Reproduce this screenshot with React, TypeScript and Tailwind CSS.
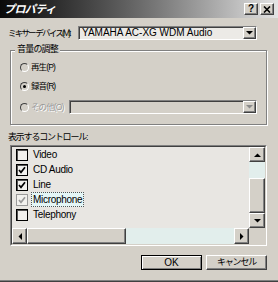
import React from "react";

const font = "font-['Liberation_Sans_Narrow','Liberation_Sans','Noto_Sans_CJK_JP',sans-serif]";
const raised =
  "border border-t-white border-l-white border-b-[#404040] border-r-[#404040] shadow-[inset_-1px_-1px_0_#808080]";
const sunken =
  "border border-t-[#808080] border-l-[#808080] border-b-white border-r-white shadow-[inset_1px_1px_0_#404040]";

type Dir = "up" | "down" | "left" | "right";

function Arrow({ dir, color = "#000" }: { dir: Dir; color?: string }) {
  const vert = dir === "up" || dir === "down";
  const pts = {
    up: "0,4 7,4 3.5,0.5",
    down: "0,0 7,0 3.5,3.5",
    left: "4,0 4,7 0.5,3.5",
    right: "0,0 0,7 3.5,3.5",
  }[dir];
  return (
    <svg width={vert ? 7 : 4} height={vert ? 4 : 7} viewBox={vert ? "0 0 7 4" : "0 0 4 7"}>
      <polygon points={pts} fill={color} />
    </svg>
  );
}

function Combo({ text, disabled, className }: { text?: string; disabled?: boolean; className: string }) {
  return (
    <div className={`flex h-[14px] shrink-0 ${sunken} ${disabled ? "bg-[#d4d0c8]" : "bg-[#eceae6]"} ${className}`}>
      <div className="flex-1 whitespace-nowrap pl-[3px] text-[10px] leading-[12px] text-black">{text}</div>
      <div className={`flex w-[13px] items-center justify-center bg-[#d4d0c8] ${raised}`}>
        <Arrow dir="down" color={disabled ? "#8a8a8a" : "#000"} />
      </div>
    </div>
  );
}

function Radio({ label, checked, disabled }: { label: string; checked?: boolean; disabled?: boolean }) {
  return (
    <div className="flex items-center whitespace-nowrap">
      <span className="flex h-[9px] w-[9px] shrink-0 items-center justify-center rounded-full border border-t-[#404040] border-l-[#404040] border-b-white border-r-white">
        {checked && <span className="h-[3px] w-[3px] rounded-full bg-black" />}
      </span>
      <span
        className={`ml-[2px] text-[8.5px] tracking-[-0.9px] ${
          disabled ? "text-[#9a9a9a] [text-shadow:1px_1px_0_#fff]" : "text-black"
        }`}
      >
        {label}
      </span>
    </div>
  );
}

function Check({ checked, dim }: { checked?: boolean; dim?: boolean }) {
  const c = dim ? "#9a9a9a" : "#000";
  return (
    <span
      className={`flex h-[12px] w-[12px] shrink-0 items-center justify-center border bg-[#f2f1ee] ${
        dim ? "border-[#9a9a9a]" : "border-black shadow-[inset_1px_1px_0_#555]"
      }`}
    >
      {checked && (
        <svg width="8" height="8" viewBox="0 0 8 8">
          <path d="M1 4l2 2.3L7 1.3" fill="none" stroke={c} strokeWidth="1.7" />
        </svg>
      )}
    </span>
  );
}

const items = [
  { name: "Video", checked: false },
  { name: "CD Audio", checked: true },
  { name: "Line", checked: true },
  { name: "Microphone", checked: true, focus: true },
  { name: "Telephony", checked: false },
];

export default function App() {
  return (
    <div className={`flex h-[282px] w-[278px] flex-col bg-[#d4d0c8] ${font} border-b border-b-[#404040] shadow-[inset_0_-1px_0_#808080]`}>
      {/* title bar */}
      <div className="flex h-[18px] shrink-0 items-center bg-gradient-to-r from-[#0a0a0a] via-[#6a6a6a] to-[#e4e4e4] pl-[4px] pr-[4px]">
        <span className="text-[11px] font-bold italic tracking-[-0.6px] text-white">プロパティ</span>
        <div className="ml-auto flex gap-[2px]">
          <div className={`flex h-[12px] w-[14px] items-center justify-center bg-[#d4d0c8] ${raised}`}>
            <span className="text-[10px] font-bold leading-none text-black">?</span>
          </div>
          <div className={`flex h-[12px] w-[14px] items-center justify-center bg-[#d4d0c8] ${raised}`}>
            <svg width="8" height="7" viewBox="0 0 8 7">
              <path d="M1 0.5l6 6M7 0.5l-6 6" stroke="#000" strokeWidth="1.6" />
            </svg>
          </div>
        </div>
      </div>

      {/* mixer device */}
      <div className="mt-[8px] flex h-[14px] items-center">
        <span className="w-[78px] shrink-0 whitespace-nowrap pl-[8px] text-[8.5px] tracking-[-1.8px] text-black">
          ミキサー デバイス(M):
        </span>
        <Combo text="YAMAHA AC-XG WDM Audio" className="w-[179px]" />
      </div>

      {/* volume group */}
      <div className="relative ml-[10px] mt-[10px] h-[75px] w-[257px] shrink-0 border border-[#808080] shadow-[inset_1px_1px_0_#fff,1px_1px_0_#fff]">
        <span className="absolute -top-[8px] left-[4px] whitespace-nowrap bg-[#d4d0c8] px-[2px] text-[9px] tracking-[-0.8px] text-black">
          音量の調整
        </span>
        <div className="flex flex-col pl-[9px] pt-[9px]">
          <div className="flex h-[14px] items-center">
            <Radio label="再生(P)" />
          </div>
          <div className="mt-[5px] flex h-[14px] items-center">
            <Radio label="録音(R)" checked />
          </div>
          <div className="mt-[7px] flex h-[14px] items-center">
            <div className="w-[49px] shrink-0">
              <Radio label="その他(O)" disabled />
            </div>
            <Combo disabled className="w-[188px]" />
          </div>
        </div>
      </div>

      {/* controls label */}
      <div className="mt-[6px] h-[13px] whitespace-nowrap pl-[8px] text-[9px] leading-[13px] tracking-[-1.2px] text-black">
        表示するコントロール:
      </div>

      {/* list */}
      <div className="ml-[10px] mt-[1px] h-[101px] w-[257px] shrink-0 border border-t-[#808080] border-l-[#808080] border-b-white border-r-white">
        <div className="grid h-full grid-cols-[1fr_16px] grid-rows-[1fr_16px] border border-t-[#404040] border-l-[#404040] border-b-[#d4d0c8] border-r-[#d4d0c8] bg-[#e8e6e2]">
          <div className="flex flex-col">
            {items.map((it) => (
              <div key={it.name} className="flex h-[15px] items-center pl-[4px]">
                <Check checked={it.checked} dim={it.focus} />
                <span
                  className={`ml-[3px] whitespace-nowrap px-[1px] text-[10px] leading-[13px] tracking-[-0.3px] text-black ${
                    it.focus ? "border border-dotted border-[#555] bg-[#e4f6f6]" : "border border-transparent"
                  }`}
                >
                  {it.name}
                </span>
              </div>
            ))}
          </div>
          {/* vertical scrollbar */}
          <div className="flex flex-col">
            <div className={`flex h-[15px] items-center justify-center bg-[#d4d0c8] ${raised}`}>
              <Arrow dir="up" />
            </div>
            <div className="h-[16px] bg-[#e2eeec]" />
            <div className={`flex-1 bg-[#d4d0c8] ${raised}`} />
            <div className={`flex h-[15px] items-center justify-center bg-[#d4d0c8] ${raised}`}>
              <Arrow dir="down" />
            </div>
          </div>
          {/* horizontal scrollbar */}
          <div className="flex">
            <div className={`flex w-[15px] items-center justify-center bg-[#d4d0c8] ${raised}`}>
              <Arrow dir="left" />
            </div>
            <div className={`w-[99px] bg-[#d4d0c8] ${raised}`} />
            <div className="flex-1 bg-[#e2eeec]" />
            <div className={`flex w-[15px] items-center justify-center bg-[#d4d0c8] ${raised}`}>
              <Arrow dir="right" />
            </div>
          </div>
          <div className="bg-[#d4d0c8]" />
        </div>
      </div>

      {/* buttons */}
      <div className="mt-[9px] flex justify-end gap-[4px] pr-[11px]">
        <button className="flex h-[15px] w-[61px] items-center justify-center border border-black bg-[#d4d0c8] shadow-[inset_1px_1px_0_#fff,inset_-1px_-1px_0_#808080]">
          <span className="text-[10px] leading-none text-black">OK</span>
        </button>
        <button className={`flex h-[15px] w-[61px] items-center justify-center bg-[#d4d0c8] ${raised}`}>
          <span className="text-[9px] leading-none tracking-[-1.2px] text-black">キャンセル</span>
        </button>
      </div>
    </div>
  );
}
